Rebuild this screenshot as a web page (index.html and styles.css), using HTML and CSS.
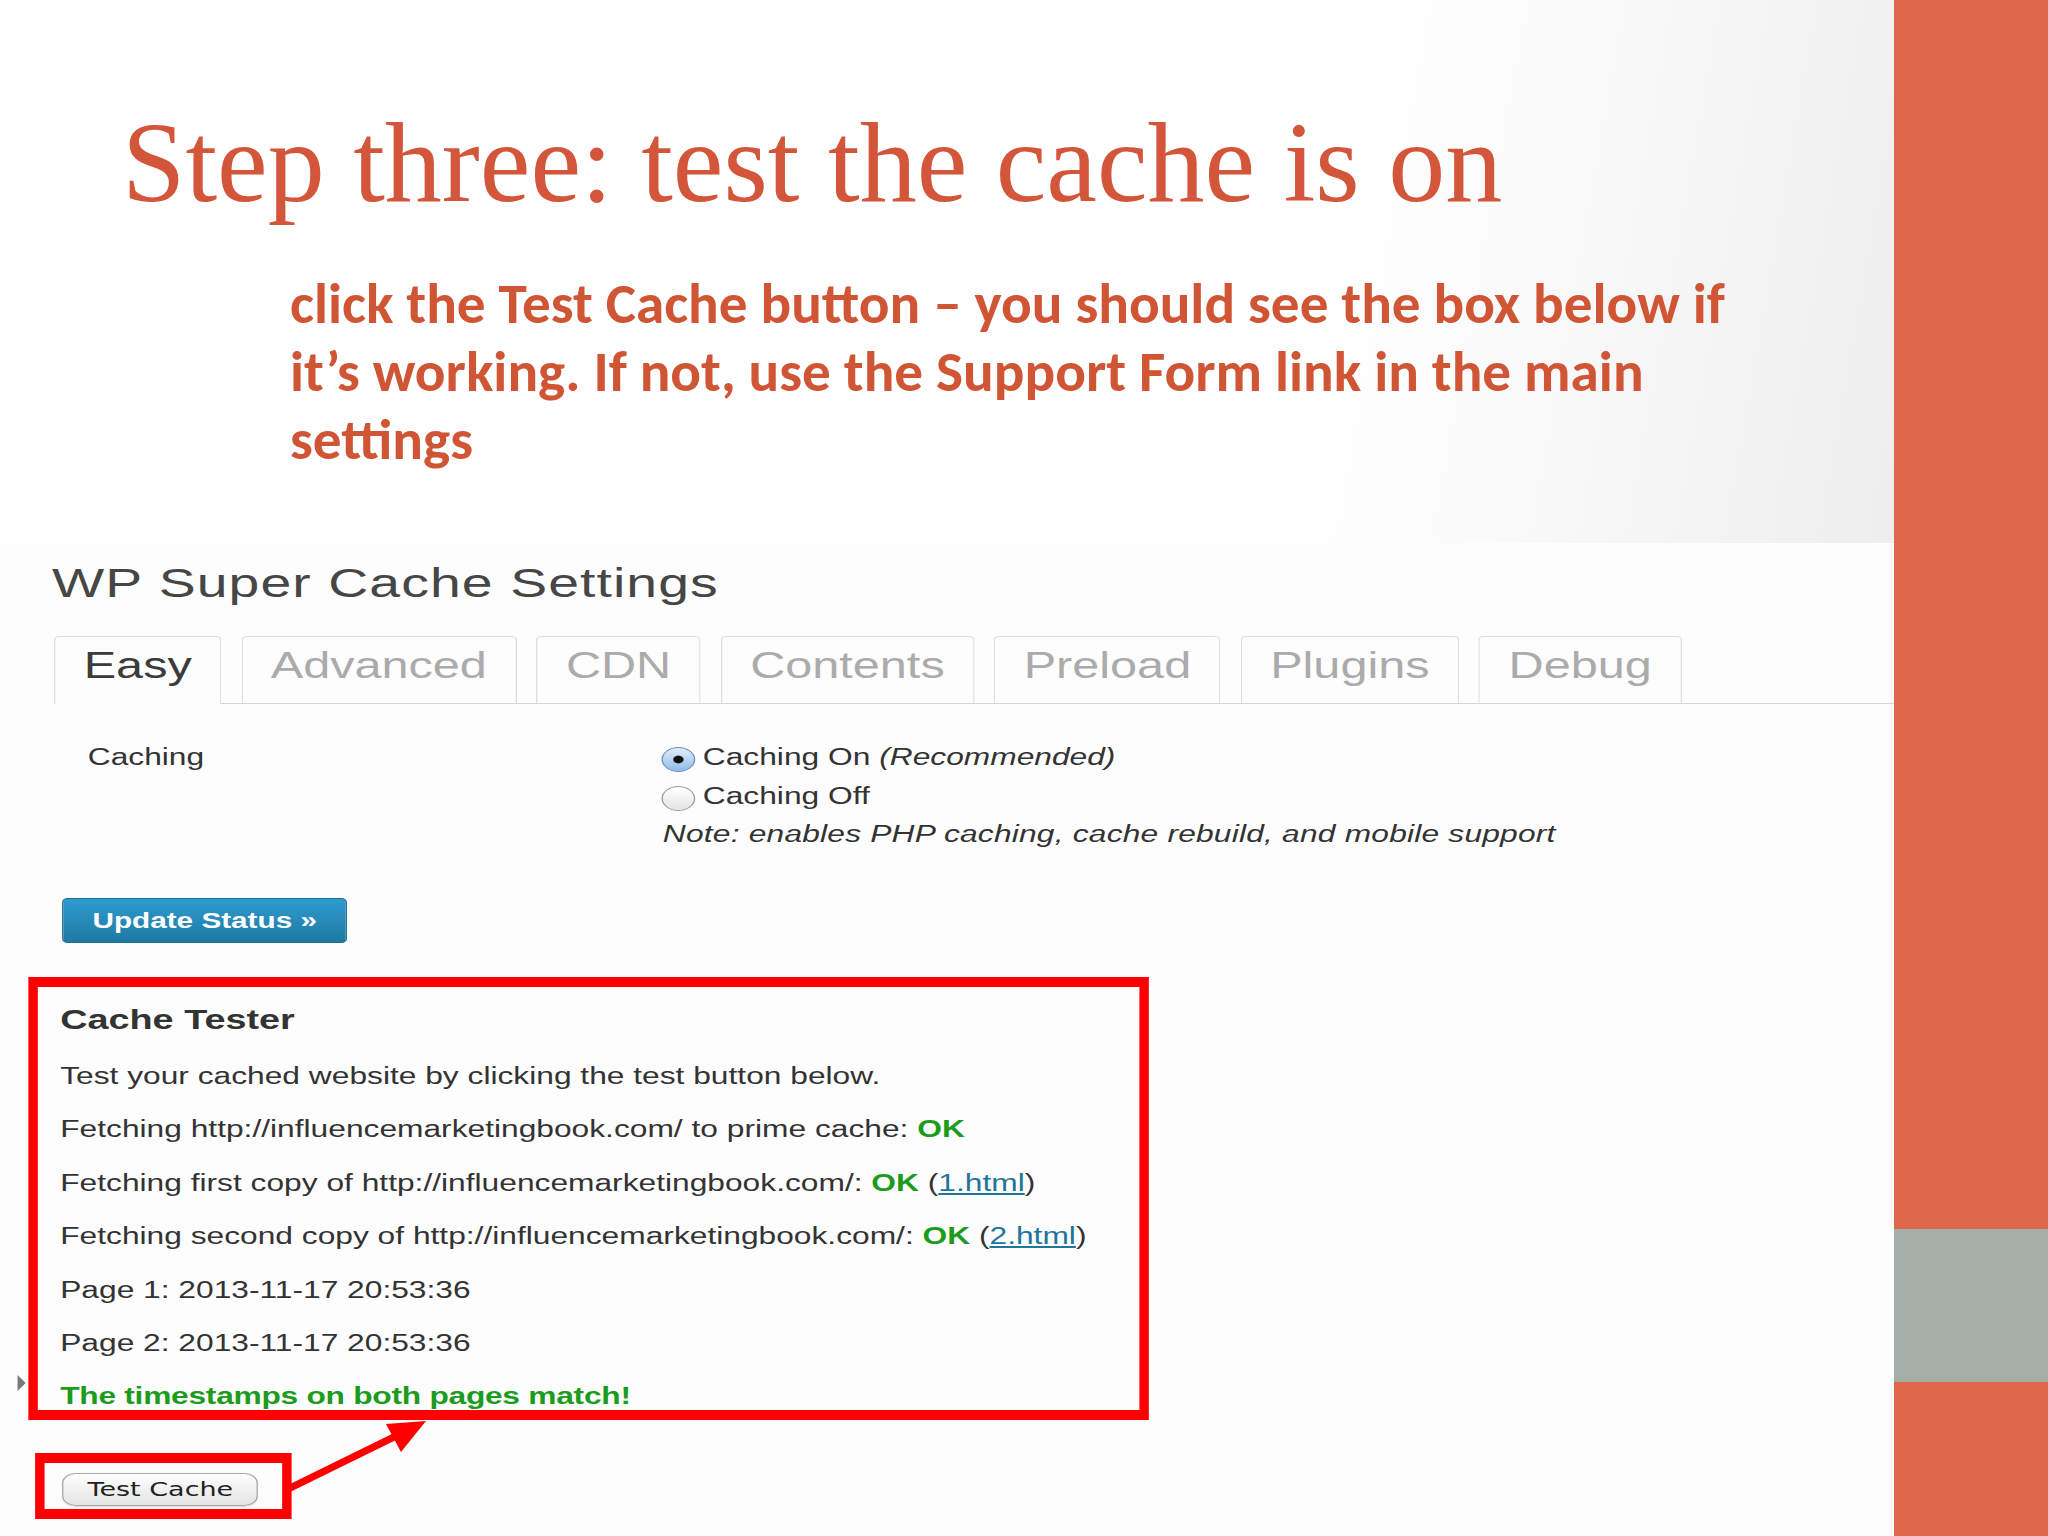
FILE: index.html
```html
<!DOCTYPE html>
<html lang="en">
<head>
<meta charset="utf-8">
<title>Step three: test the cache is on</title>
<link rel="stylesheet" href="styles.css">
</head>
<body>
<div class="slide">
  <main class="content">
    <header class="head">
      <h1 class="title">Step three: test the cache is on</h1>
      <p class="lead">click the Test Cache button – you should see the box below if<br>it’s working. If not, use the Support Form link in the main<br>settings</p>
    </header>
    <section class="shot">
      <div class="wp">
        <h2 class="wp-title">WP Super Cache Settings</h2>
        <nav class="tabs">
          <span class="tab active">Easy</span>
          <span class="tab">Advanced</span>
          <span class="tab">CDN</span>
          <span class="tab">Contents</span>
          <span class="tab">Preload</span>
          <span class="tab">Plugins</span>
          <span class="tab">Debug</span>
        </nav>
        <div class="row">
          <div class="label">Caching</div>
          <div class="field">
            <div class="opt"><span class="radio on"></span><span>Caching On <em>(Recommended)</em></span></div>
            <div class="opt"><span class="radio"></span><span>Caching Off</span></div>
            <div class="note">Note: enables PHP caching, cache rebuild, and mobile support</div>
          </div>
        </div>
        <button class="primary" type="button">Update Status »</button>
        <div class="tester-wrap">
          <span class="marker"></span>
          <div class="tester">
            <h3>Cache Tester</h3>
            <p class="first">Test your cached website by clicking the test button below.</p>
            <p>Fetching http://influencemarketingbook.com/ to prime cache: <b class="ok">OK</b></p>
            <p>Fetching first copy of http://influencemarketingbook.com/: <b class="ok">OK</b> (<a href="#">1.html</a>)</p>
            <p>Fetching second copy of http://influencemarketingbook.com/: <b class="ok">OK</b> (<a href="#">2.html</a>)</p>
            <p>Page 1: 2013-11-17 20:53:36</p>
            <p>Page 2: 2013-11-17 20:53:36</p>
            <p class="match">The timestamps on both pages match!</p>
          </div>
        </div>
        <div class="test-box"><button class="test-btn" type="button">Test Cache</button></div>
      </div>
      <svg class="arrow" viewBox="0 0 520 993" width="520" height="993" aria-hidden="true">
        <line x1="286" y1="947" x2="396" y2="893" stroke="#ff0000" stroke-width="7"/>
        <polygon points="426,878 386,881 401,909" fill="#ff0000"/>
      </svg>
    </section>
  </main>
  <aside class="bar">
    <div class="bar-top"></div>
    <div class="bar-mid"></div>
    <div class="bar-bot"></div>
  </aside>
</div>
</body>
</html>
```

FILE: styles.css
```css
html, body {
  margin: 0;
  padding: 0;
}

body {
  width: 2048px;
  height: 1536px;
  overflow: hidden;
  background: #ffffff;
}

.slide {
  display: grid;
  grid-template-columns: 1894px 154px;
  height: 1536px;
}

.content {
  display: flex;
  flex-direction: column;
  min-width: 0;
}

/* ---------- slide heading ---------- */
.head {
  height: 543px;
  box-sizing: border-box;
  padding: 106px 0 0 122px;
  background: linear-gradient(100deg, #ffffff 70%, #eeeeee 100%);
}

.title {
  margin: 0;
  font-family: "Liberation Serif", "DejaVu Serif", serif;
  font-weight: 400;
  font-size: 114px;
  line-height: 114px;
  color: #d3563a;
  white-space: nowrap;
}

.lead {
  margin: 50px 0 0 168px;
  font-family: Carlito, "Liberation Sans Narrow", "Liberation Sans", sans-serif;
  font-weight: 700;
  font-size: 57.2px;
  line-height: 68px;
  color: #cf5535;
  white-space: nowrap;
}

/* ---------- screenshot ---------- */
.shot {
  flex: 1;
  position: relative;
  background: #fdfdfd;
  overflow: hidden;
}

.wp {
  width: 1403px;
  transform: scaleX(1.35);
  transform-origin: 0 0;
  display: flex;
  flex-direction: column;
  align-items: flex-start;
  font-family: "Liberation Sans", Arial, sans-serif;
  font-size: 23.5px;
  color: #333333;
}

.wp-title {
  margin: 20px 0 0 38.5px;
  font-size: 41px;
  line-height: 40px;
  font-weight: 400;
  letter-spacing: 0.8px;
  color: #464646;
}

.tabs {
  align-self: stretch;
  display: flex;
  gap: 14.5px;
  margin: 33px 0 0 40px;
  border-bottom: 1px solid #d6d6d6;
}

.tab {
  border: 1px solid #dedede;
  border-bottom: 0;
  border-radius: 4px 4px 0 0;
  padding: 0 21px 9px;
  font-size: 36px;
  line-height: 57px;
  color: #ababab;
}

.tab.active {
  color: #3b3b3b;
  background: #fdfdfd;
  margin-bottom: -1px;
  padding-bottom: 10px;
}

.row {
  display: grid;
  grid-template-columns: 424.6px auto;
  margin: 34.4px 0 0 65px;
}

.label {
  line-height: 39px;
}

.opt {
  display: flex;
  align-items: flex-start;
  line-height: 39px;
}

.radio {
  width: 25px;
  height: 25px;
  box-sizing: border-box;
  margin: 8.6px 6px 0 0;
  border-radius: 50%;
  border: 1px solid #9c9c9c;
  background: linear-gradient(#ffffff, #e4e4e4);
}

.radio.on {
  border-color: #6d8fba;
  background:
    radial-gradient(circle, #111111 0 3.2px, transparent 4.4px),
    linear-gradient(#e2eefb, #8fbbe9);
}

.note {
  margin-left: 1.4px;
  font-style: italic;
  line-height: 36px;
  letter-spacing: 0.15px;
}

.primary {
  margin: 45.6px 0 0 46px;
  padding: 0 21.5px;
  font-family: "Liberation Sans", Arial, sans-serif;
  font-size: 22px;
  font-weight: 700;
  line-height: 43px;
  color: #ffffff;
  border: 1px solid #1f6f94;
  border-radius: 4px;
  background: linear-gradient(#2e9bd0, #2079a3);
}

.tester-wrap {
  display: flex;
  align-items: flex-start;
  margin-top: 34px;
}

.marker {
  width: 0;
  height: 0;
  margin: 398px 0 0 12.6px;
  border-left: 6px solid #7a7a7a;
  border-top: 8.5px solid transparent;
  border-bottom: 8.5px solid transparent;
}

.tester {
  margin-left: 2.1px;
  width: 830.3px;
  height: 443px;
  box-sizing: border-box;
  border: solid #ff0000;
  border-width: 10px 7.4px;
  padding: 16.3px 0 0 16.9px;
  overflow: hidden;
}

.tester h3 {
  margin: 0 0 12.7px;
  font-size: 28px;
  line-height: 34px;
  font-weight: 700;
  color: #333333;
}

.tester p {
  margin: 0;
  line-height: 53.4px;
  white-space: nowrap;
}

.ok,
.match {
  color: #1c9c1c;
  font-weight: 700;
}

.match {
  letter-spacing: -0.2px;
}

.tester a {
  color: #21759b;
  text-decoration: underline;
}

.test-box {
  margin: 33px 0 0 26px;
  width: 190px;
  height: 66px;
  box-sizing: border-box;
  border: solid #ff0000;
  border-width: 10px 7.4px;
  padding: 10px 0 0 13.3px;
}

.test-btn {
  display: block;
  width: 145px;
  height: 33px;
  box-sizing: border-box;
  padding: 0;
  font-family: "DejaVu Sans", sans-serif;
  font-size: 20px;
  line-height: 31px;
  color: #222222;
  border: 1px solid #a8a8a8;
  border-radius: 10px;
  background: linear-gradient(#fefefe, #e4e4e4);
  box-shadow: 0 1px 1px rgba(0, 0, 0, 0.15);
}

.arrow {
  position: absolute;
  left: 0;
  top: 0;
  pointer-events: none;
}

/* ---------- right bar ---------- */
.bar {
  display: flex;
  flex-direction: column;
}

.bar-top {
  height: 1229px;
  background: #dd674b;
}

.bar-mid {
  height: 153px;
  background: #a5ada7;
}

.bar-bot {
  flex: 1;
  background: #dd674b;
}
```
